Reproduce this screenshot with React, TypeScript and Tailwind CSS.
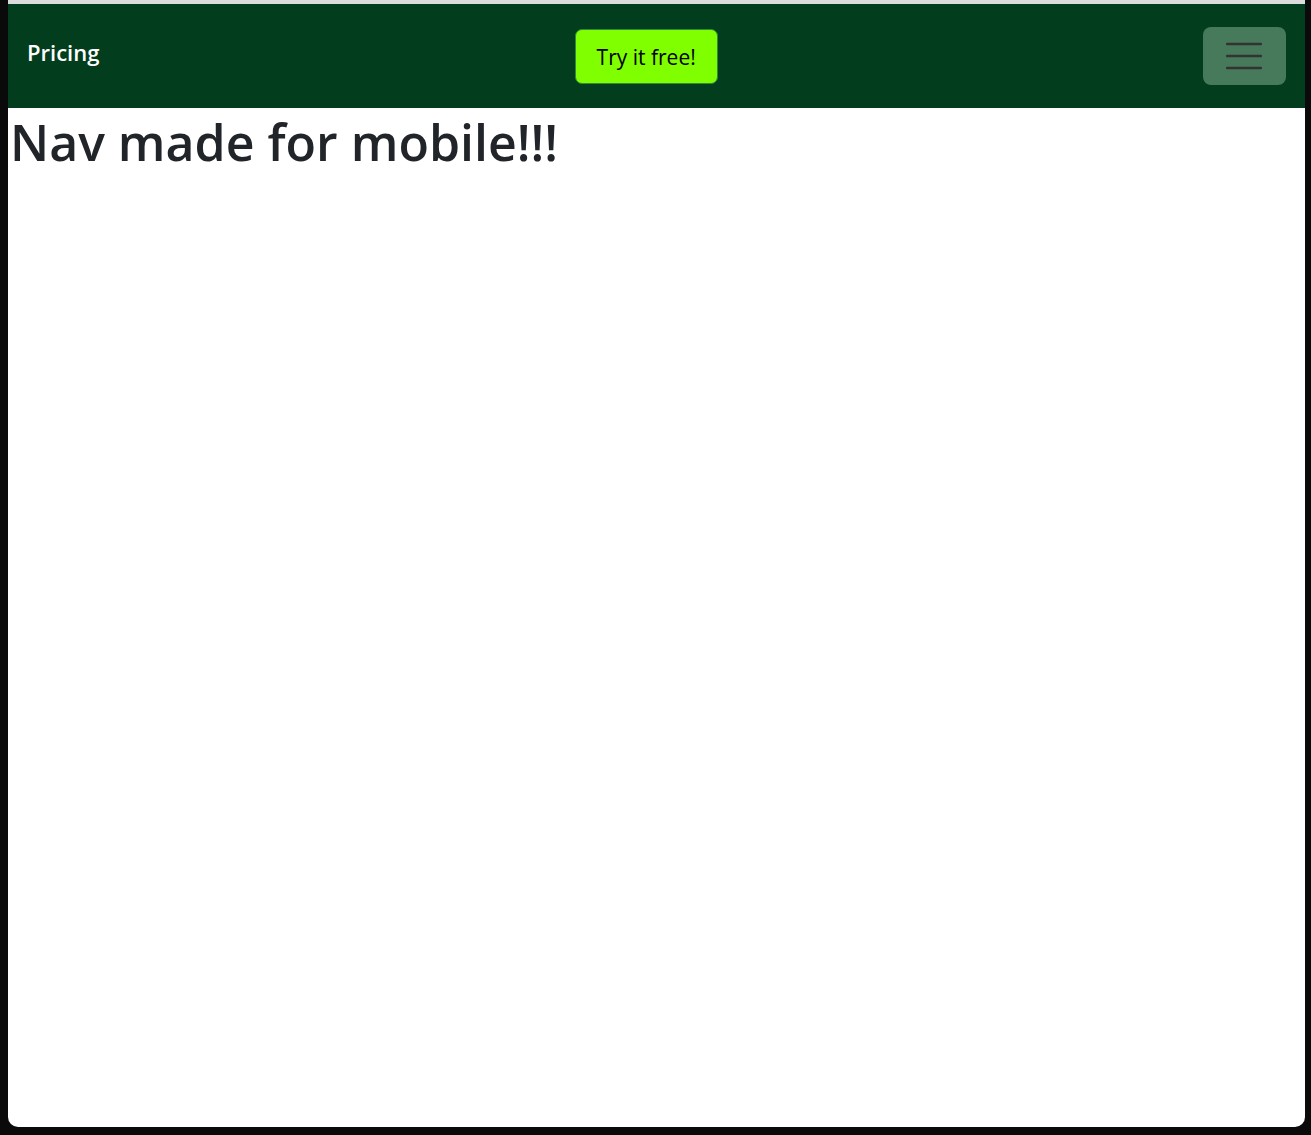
export default function App() {
  return (
    <div className="h-[1135px] w-[1311px] bg-[#0a0a0a] pl-[8px] pr-[6px] pb-[8px]">
      <div className="flex h-full flex-col overflow-hidden rounded-b-[10px] bg-white">
        <div className="h-[4px] bg-[#dcdcdc]" />
        <nav className="flex h-[104px] items-center justify-between bg-[#023d1d] pl-[19px] pr-[19px]">
          <a
            href="#"
            className="mb-[8px] text-[22px] font-semibold text-white"
            style={{ fontFamily: "'Open Sans', sans-serif" }}
          >
            Pricing
          </a>
          <button
            type="button"
            className="ml-[-10px] h-[55px] w-[143px] rounded-[7px] border border-[#2d8a3a] bg-[#7fff00] pt-[4px] text-[21px] text-black"
            style={{ fontFamily: "'Open Sans', sans-serif" }}
          >
            Try it free!
          </button>
          <button
            type="button"
            className="flex h-[58px] w-[83px] items-center justify-center rounded-[8px] bg-[#467a5a]"
          >
            <svg width="36" height="28" viewBox="0 0 36 28">
              <path
                d="M1 2h34M1 14h34M1 26h34"
                stroke="#333"
                strokeWidth="2.5"
                strokeLinecap="round"
              />
            </svg>
          </button>
        </nav>
        <h1
          className="mt-[4px] pl-[2px] text-[50px] font-semibold leading-[1.2] text-[#212529]"
          style={{ fontFamily: "'Open Sans', sans-serif" }}
        >
          Nav made for mobile!!!
        </h1>
      </div>
    </div>
  );
}
